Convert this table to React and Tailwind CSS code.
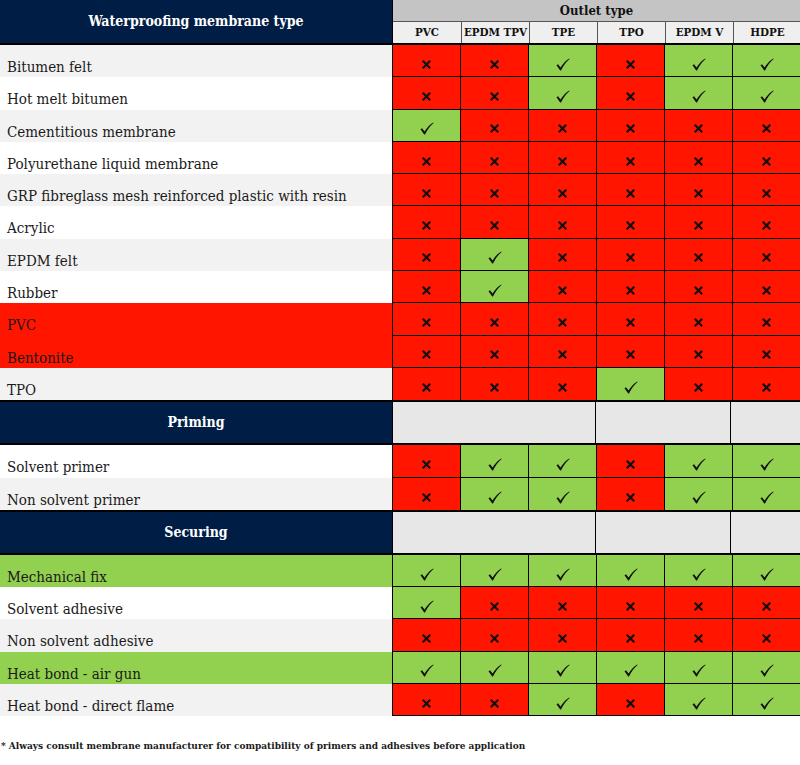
import React from 'react';

const cols = ['PVC', 'EPDM TPV', 'TPE', 'TPO', 'EPDM V', 'HDPE'];

// 1 = compatible (green tick), 0 = not compatible (red cross)
const membranes = [
  { name: 'Bitumen felt', bg: 'bg-[#f2f2f2]', v: [0, 0, 1, 0, 1, 1] },
  { name: 'Hot melt bitumen', bg: 'bg-white', v: [0, 0, 1, 0, 1, 1] },
  { name: 'Cementitious membrane', bg: 'bg-[#f2f2f2]', v: [1, 0, 0, 0, 0, 0] },
  { name: 'Polyurethane liquid membrane', bg: 'bg-white', v: [0, 0, 0, 0, 0, 0] },
  { name: 'GRP fibreglass mesh reinforced plastic with resin', bg: 'bg-[#f2f2f2]', v: [0, 0, 0, 0, 0, 0] },
  { name: 'Acrylic', bg: 'bg-white', v: [0, 0, 0, 0, 0, 0] },
  { name: 'EPDM felt', bg: 'bg-[#f2f2f2]', v: [0, 1, 0, 0, 0, 0] },
  { name: 'Rubber', bg: 'bg-white', v: [0, 1, 0, 0, 0, 0] },
  { name: 'PVC', bg: 'bg-[#ff1500]', v: [0, 0, 0, 0, 0, 0] },
  { name: 'Bentonite', bg: 'bg-[#ff1500]', v: [0, 0, 0, 0, 0, 0] },
  { name: 'TPO', bg: 'bg-[#f2f2f2]', v: [0, 0, 0, 1, 0, 0] },
];

const priming = [
  { name: 'Solvent primer', bg: 'bg-white', v: [0, 1, 1, 0, 1, 1] },
  { name: 'Non solvent primer', bg: 'bg-[#f2f2f2]', v: [0, 1, 1, 0, 1, 1] },
];

const securing = [
  { name: 'Mechanical fix', bg: 'bg-[#92d050]', v: [1, 1, 1, 1, 1, 1] },
  { name: 'Solvent adhesive', bg: 'bg-white', v: [1, 0, 0, 0, 0, 0] },
  { name: 'Non solvent adhesive', bg: 'bg-[#f2f2f2]', v: [0, 0, 0, 0, 0, 0] },
  { name: 'Heat bond - air gun', bg: 'bg-[#92d050]', v: [1, 1, 1, 1, 1, 1] },
  { name: 'Heat bond - direct flame', bg: 'bg-[#f2f2f2]', v: [0, 0, 1, 0, 1, 1] },
];

const font = { fontFamily: '"DejaVu Serif", "Liberation Serif", serif' };

function Tick() {
  return (
    <svg width="14" height="13" viewBox="0 0 14 13">
      <path d="M0.5 7.2 L2 6.2 L4.6 9.6 Q8 3.5 13.2 0.4 L13.6 0.9 Q8.6 5 5 12.4 L4.2 12.4 Z" fill="#111" />
    </svg>
  );
}

function Cross() {
  return (
    <svg width="9" height="9" viewBox="0 0 9 9">
      <path d="M1.5 1.5 L7.5 7.5 M7.5 1.5 L1.5 7.5" stroke="#111" strokeWidth="2.2" strokeLinecap="square" />
    </svg>
  );
}

function DataRow({ row, last }) {
  return (
    <div className="grid h-[32.3px] grid-cols-[392px_repeat(6,68px)] grid-rows-[100%]">
      <div className={`${row.bg} flex items-start whitespace-nowrap pl-[7px] pt-[13px] text-[15px] leading-[18px] font-stretch-semi-condensed text-[#1a1a1a]`}>
        {row.name}
      </div>
      {row.v.map((ok, i) => (
        <div
          key={i}
          className={`flex items-center justify-center border-l border-black pt-[7px] ${
            last ? '' : 'border-b'
          } ${ok ? 'bg-[#92d050]' : 'bg-[#ff1500]'}`}
        >
          {ok ? <Tick /> : <Cross />}
        </div>
      ))}
    </div>
  );
}

function SectionHeader({ title }) {
  return (
    <div className="grid h-[45px] grid-cols-[392px_203px_135px_70px] border-y-2 border-black">
      <div className="flex items-center justify-center bg-[#001e45] text-[14px] font-bold font-stretch-semi-condensed text-white">
        {title}
      </div>
      <div className="border-l border-black bg-[#e7e7e7]" />
      <div className="border-l border-black bg-[#e7e7e7]" />
      <div className="border-l border-black bg-[#e7e7e7]" />
    </div>
  );
}

export default function App() {
  return (
    <div className="h-[765px] w-[800px] bg-white" style={font}>
      <div className="w-[800px]">
        {/* Header */}
        <div className="grid h-[45px] grid-cols-[392px_408px] grid-rows-[43px] border-b-2 border-black">
          <div className="flex items-center justify-center bg-[#001e45] pb-[1px] text-[14px] font-bold font-stretch-semi-condensed text-white">
            Waterproofing membrane type
          </div>
          <div className="flex flex-col border-l border-black">
            <div className="flex h-[21px] items-center justify-center bg-[#c4c4c4] text-[13px] font-semibold font-stretch-semi-condensed text-[#111]">
              Outlet type
            </div>
            <div className="grid h-[22px] grid-cols-[repeat(6,68px)]">
              {cols.map((c) => (
                <div
                  key={c}
                  className="flex items-center justify-center whitespace-nowrap border-t border-l border-[#555] bg-[#efefef] text-[11.5px] font-semibold font-stretch-condensed text-[#111] first:border-l-0"
                >
                  {c}
                </div>
              ))}
            </div>
          </div>
        </div>

        {membranes.map((r, i) => (
          <DataRow key={r.name} row={r} last={i === membranes.length - 1} />
        ))}

        <SectionHeader title="Priming" />

        {priming.map((r, i) => (
          <DataRow key={r.name} row={r} last={i === priming.length - 1} />
        ))}

        <SectionHeader title="Securing" />

        {securing.map((r) => (
          <DataRow key={r.name} row={r} />
        ))}
      </div>

      <p className="mt-[22px] whitespace-nowrap pl-px text-[10px] font-bold font-stretch-condensed text-[#1a1a1a]">
        * Always consult membrane manufacturer for compatibility of primers and adhesives before application
      </p>
    </div>
  );
}
